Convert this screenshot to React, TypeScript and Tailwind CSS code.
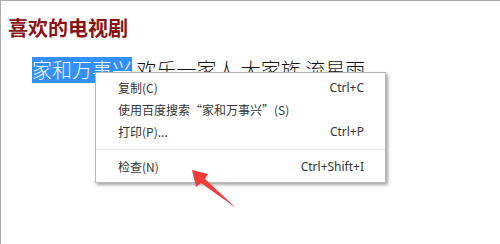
import React from "react";

const cjk = { fontFamily: '"Noto Sans CJK SC", "Noto Sans", sans-serif' };

function Item({ label, shortcut }: { label: string; shortcut?: string }) {
  return (
    <div className="flex h-[22px] items-center justify-between pl-[22px] pr-[21px] text-[12px] text-[#333]">
      <span>{label}</span>
      {shortcut && <span style={{ fontFamily: '"Noto Sans", "Open Sans", sans-serif' }}>{shortcut}</span>}
    </div>
  );
}

export default function App() {
  return (
    <div
      className="relative h-[244px] w-[500px] overflow-hidden border-l border-t border-[#ababab] bg-white"
      style={cjk}
    >
      <h1 className="mt-[17px] pl-[7px] text-[20px] font-bold leading-[20px] text-[#8a1212]">
        喜欢的电视剧
      </h1>
      <p className="mt-[19px] whitespace-nowrap pl-[31px] text-[20px] font-light leading-[26px] text-[#111]">
        <span className="inline-block h-[26px] bg-[#3390ff] text-white">家和万事兴</span>
        <span> 欢乐一家人 大家族 流星雨</span>
      </p>

      <div className="absolute left-[94px] top-[71px] w-[291px] border border-[#b8b8b8] bg-white py-[4px] shadow-[2px_2px_3px_rgba(0,0,0,0.35)]">
        <Item label="复制(C)" shortcut="Ctrl+C" />
        <Item label="使用百度搜索“家和万事兴”(S)" />
        <Item label="打印(P)..." shortcut="Ctrl+P" />
        <div className="my-[6px] h-px bg-[#e3e3e3]" />
        <Item label="检查(N)" shortcut="Ctrl+Shift+I" />
      </div>

      <svg className="absolute left-[179px] top-[159px]" width="70" height="55" viewBox="180 160 70 55">
        <polygon
          points="192,170 208,174 205,179 236,208 201,183 196,187"
          fill="#f23b3b"
        />
      </svg>
    </div>
  );
}
